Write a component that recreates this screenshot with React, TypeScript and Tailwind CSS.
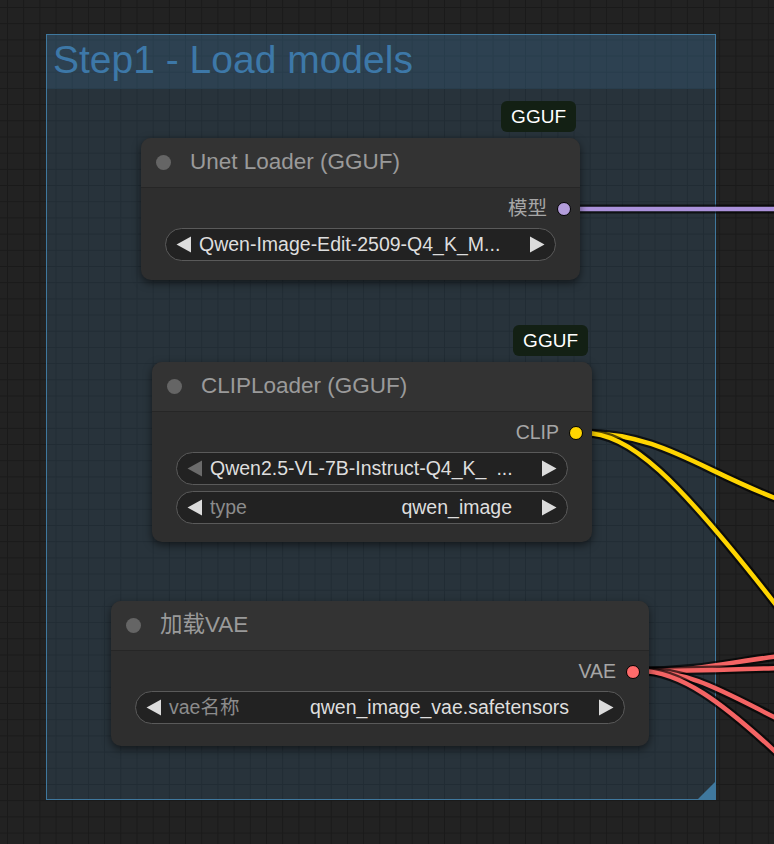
import React from "react";

type W = { value: string; label?: string; dimLeft?: boolean; dots?: boolean };

const Tri = ({ dir, dim }: { dir: "l" | "r"; dim?: boolean }) => (
  <svg width="15" height="17" viewBox="0 0 15 17" className="shrink-0">
    <path
      d={dir === "l" ? "M15 0.5 L15 16.5 L0.5 8.5 Z" : "M0 0.5 L0 16.5 L14.5 8.5 Z"}
      fill={dim ? "#6b6b6b" : "#dcdcdc"}
    />
  </svg>
);

const Widget = ({ w }: { w: W }) => (
  <div className="mx-[24px] h-[33px] rounded-full border border-[#5a5a5a] bg-[#222222] flex items-center px-[10px] gap-[8px] text-[19.5px] leading-none whitespace-nowrap">
    <Tri dir="l" dim={w.dimLeft} />
    {w.label ? (
      <>
        <span className="text-[#8c8c8c]">{w.label}</span>
        <div className="flex-1" />
        <span className="text-[#dedede] mr-[22px]">{w.value}</span>
      </>
    ) : (
      <>
        <span className="text-[#dedede]">
          {w.value}
          {w.dots ? <span className="ml-[10px]">...</span> : null}
        </span>
        <div className="flex-1" />
      </>
    )}
    <Tri dir="r" />
  </div>
);

const Node = ({
  cls,
  title,
  out,
  dotCls,
  widgets,
  badge,
  pb,
}: {
  cls: string;
  title: string;
  out: string;
  dotCls: string;
  widgets: W[];
  badge?: boolean;
  pb: string;
}) => (
  <div className={"absolute rounded-[10px] bg-[#2e2e2e] shadow-[0_3px_8px_rgba(0,0,0,0.55)] " + cls}>
    {badge ? (
      <div className="absolute right-[4px] top-[-37px] h-[31px] px-[10px] rounded-[6px] bg-[#132014] text-white text-[19px] leading-none flex items-center">
        GGUF
      </div>
    ) : null}
    <div className="h-[50px] rounded-t-[10px] bg-[#333333] border-b border-[#262626] flex items-center pl-[15px] gap-[19px]">
      <div className="w-[15px] h-[15px] rounded-full bg-[#656565]" />
      <span className="text-[22.5px] text-[#9a9a9a] leading-none">{title}</span>
    </div>
    <div className={"pt-[5px] " + pb}>
      <div className="h-[32px] flex items-center justify-end pr-[9px] gap-[10px]">
        <span className="text-[19.5px] text-[#a6a6a6] leading-none">{out}</span>
        <div className={"w-[14px] h-[14px] rounded-full border-[1.5px] border-black " + dotCls} />
      </div>
      <div className="mt-[3px] flex flex-col gap-[6px]">
        {widgets.map((w, i) => (
          <Widget key={i} w={w} />
        ))}
      </div>
    </div>
  </div>
);

const Link = ({ d, color }: { d: string; color: string }) => (
  <>
    <path d={d} fill="none" stroke="rgba(0,0,0,0.65)" strokeWidth={9} strokeLinecap="round" />
    <path d={d} fill="none" stroke={color} strokeWidth={4.5} strokeLinecap="round" />
  </>
);

export default function App() {
  return (
    <div className="relative w-[774px] h-[844px] overflow-hidden bg-[#222222] bg-[linear-gradient(to_right,#1a1a1a_1px,transparent_1px),linear-gradient(to_bottom,#1a1a1a_1px,transparent_1px)] bg-[size:16.2px_16.2px] bg-[position:7px_7px] font-['Liberation_Sans','Noto_Sans_CJK_SC',sans-serif]">
      {/* Group */}
      <div className="absolute left-[46px] top-[34px] w-[670px] h-[766px] border border-[#3f789e] bg-[rgba(63,120,158,0.2)]">
        <div className="h-[54px] bg-[rgba(63,120,158,0.22)] pl-[6px] pt-[5px]">
          <span className="text-[39px] leading-none text-[#3d78a8]">Step1 - Load models</span>
        </div>
        <svg className="absolute right-0 bottom-0" width="17" height="17" viewBox="0 0 17 17">
          <path d="M0 17 L17 0 L17 17 Z" fill="#3f789e" />
        </svg>
      </div>

      {/* Links */}
      <svg className="absolute left-0 top-0" width="774" height="844" viewBox="0 0 774 844">
        <Link d="M572 209 L780 209" color="#ab92db" />
        <Link d="M583 433 C660 433, 700 470, 780 500" color="#ffd500" />
        <Link d="M583 433 C630 433, 675 475, 780 610" color="#ffd500" />
        <Link d="M640 671 C700 671, 730 662, 780 656" color="#f46464" />
        <Link d="M640 671 C700 671, 740 669, 780 668" color="#f46464" />
        <Link d="M640 671 C690 671, 720 690, 780 720" color="#f46464" />
        <Link d="M640 671 C680 671, 722 702, 780 756" color="#f46464" />
      </svg>

      <Node
        cls="left-[141px] top-[138px] w-[439px]"
        title="Unet Loader (GGUF)"
        out="模型"
        dotCls="bg-[#b39ddb]"
        badge
        pb="pb-[19px]"
        widgets={[{ value: "Qwen-Image-Edit-2509-Q4_K_M..." }]}
      />
      <Node
        cls="left-[152px] top-[362px] w-[440px]"
        title="CLIPLoader (GGUF)"
        out="CLIP"
        dotCls="bg-[#ffd500]"
        badge
        pb="pb-[18px]"
        widgets={[
          { value: "Qwen2.5-VL-7B-Instruct-Q4_K_", dimLeft: true, dots: true },
          { value: "qwen_image", label: "type" },
        ]}
      />
      <Node
        cls="left-[111px] top-[601px] w-[538px]"
        title="加载VAE"
        out="VAE"
        dotCls="bg-[#ff6b6b]"
        pb="pb-[22px]"
        widgets={[{ value: "qwen_image_vae.safetensors", label: "vae名称" }]}
      />
    </div>
  );
}
